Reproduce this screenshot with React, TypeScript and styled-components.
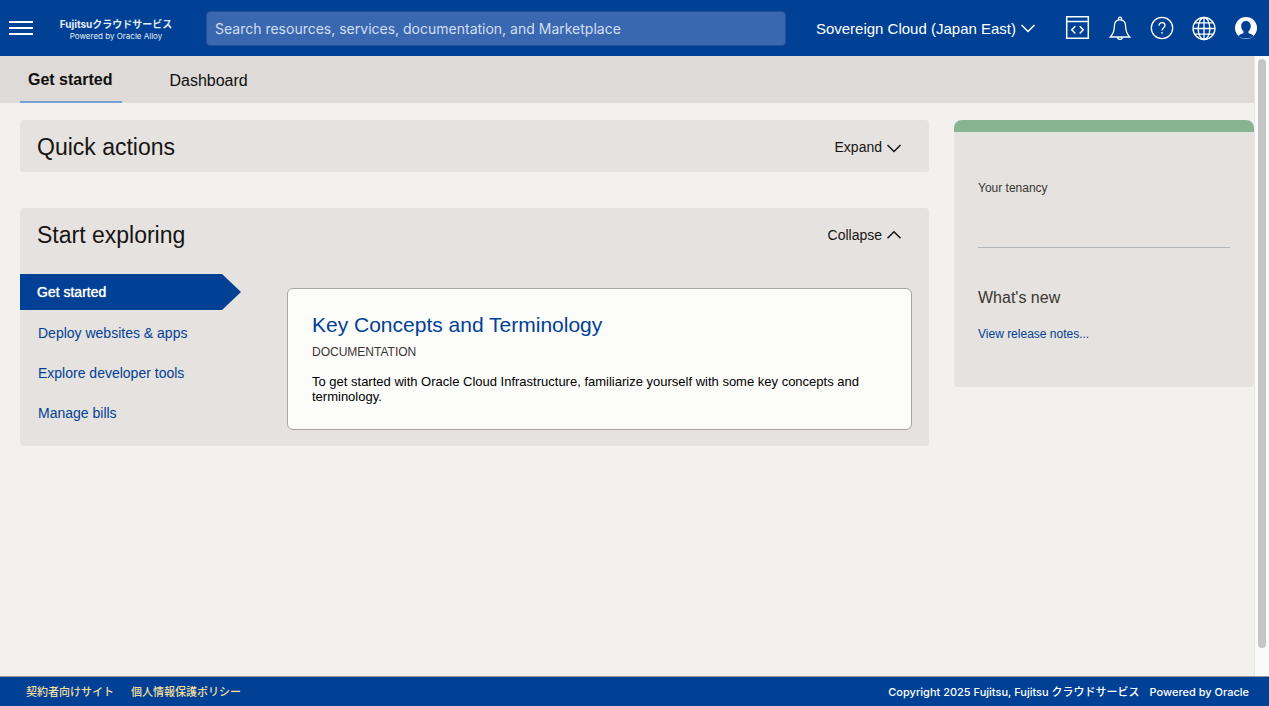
import React from "react";
import styled, { createGlobalStyle } from "styled-components";

const sans = `"Liberation Sans", "Noto Sans CJK JP", sans-serif`;
const brand = `Inter, "Noto Sans CJK JP", sans-serif`;
const navy = "#004195";

const GlobalStyle = createGlobalStyle`
  * { box-sizing: border-box; }
  body { margin: 0; background: #f2f1ed; font-family: ${sans}; color: #161513; }
  h2, h3, p, ul { margin: 0; padding: 0; font-weight: 400; }
  ul { list-style: none; }
  a { text-decoration: none; }
  button { border: 0; background: none; padding: 0; font-family: inherit; color: inherit; cursor: pointer; }
  svg { display: block; }
`;

const Page = styled.div`
  min-height: 100vh;
  display: flex;
  flex-direction: column;
`;

const TopBar = styled.header`
  height: 56px;
  padding: 0 10px 0 8px;
  display: flex;
  align-items: center;
  background: ${navy};
  color: #fff;
`;

const MenuButton = styled.button`
  width: 26px;
  height: 26px;
`;

const Logo = styled.a`
  width: 122px;
  margin: 3px 29px 0 21px;
  display: flex;
  flex-direction: column;
  align-items: center;
  color: #e6ecf5;
  font-family: ${brand};
  white-space: nowrap;
`;

const LogoName = styled.span`
  font-size: 10px;
  line-height: 13px;
  font-weight: 700;
`;

const LogoNote = styled.span`
  font-size: 8px;
  line-height: 10px;
`;

const Search = styled.input`
  flex: 1;
  min-width: 100px;
  height: 35px;
  padding: 1px 8px 0;
  border: 1px solid #1f4f98;
  border-radius: 4px;
  background: #3a68b0;
  color: #fff;
  font-family: ${brand};
  font-size: 14px;
  &::placeholder { color: #d3def0; opacity: 1; }
`;

const RegionButton = styled.button`
  margin: 0 29px 0 30px;
  padding-top: 2px;
  display: flex;
  align-items: flex-start;
  gap: 4px;
  font-size: 15px;
  line-height: 20px;
  white-space: nowrap;
`;

const Tools = styled.div`
  display: flex;
  gap: 16px;
`;

const ToolButton = styled.button`
  width: 26px;
  height: 26px;
`;

const Body = styled.div`
  flex: 1;
  display: flex;
`;

const Content = styled.main`
  flex: 1;
  min-width: 0;
`;

const ScrollRail = styled.div`
  width: 15px;
  padding: 3px 3px 28px;
  display: flex;
  justify-content: center;
  background: #fafafa;
  border-left: 1px solid #e6e6e6;
`;

const ScrollThumb = styled.div`
  width: 8px;
  border-radius: 4px;
  background: #c5c5c5;
`;

const Tabs = styled.nav`
  height: 47px;
  padding-left: 20px;
  display: flex;
  gap: 39px;
  background: #dddad7;
`;

const Tab = styled.a<{ $active?: boolean }>`
  padding: 0 10px 0 8px;
  border-bottom: 2px solid ${(p) => (p.$active ? "#7a9fd3" : "transparent")};
  color: #100f0e;
  font-size: 16px;
  line-height: ${(p) => (p.$active ? 48 : 50)}px;
  font-weight: ${(p) => (p.$active ? 700 : 400)};
`;

const Columns = styled.div`
  padding: 17px 0 20px 20px;
  display: flex;
  align-items: flex-start;
  gap: 25px;
`;

const Sections = styled.div`
  flex: 1;
  min-width: 0;
  display: flex;
  flex-direction: column;
  gap: 36px;
`;

const Panel = styled.section`
  border-radius: 4px;
  background: #e6e2df;
`;

const PanelHeader = styled.div`
  height: 52px;
  padding: 2px 27px 0 17px;
  display: flex;
  align-items: center;
  justify-content: space-between;
`;

const PanelTitle = styled.h2`
  font-size: 23px;
  line-height: 28px;
`;

const ToggleButton = styled.button`
  display: flex;
  align-items: center;
  gap: 4px;
  font-size: 14px;
  line-height: 20px;
`;

const Explore = styled.div`
  padding: 14px 17px 16px 0;
  display: flex;
`;

const TopicList = styled.ul`
  width: 267px;
  display: flex;
  flex-direction: column;
  gap: 4px;
`;

const Topic = styled.li`
  height: 36px;
  padding-left: 18px;
`;

const ActiveTopic = styled.li`
  width: 221px;
  height: 36px;
  padding-left: 17px;
  background: ${navy};
  clip-path: polygon(0 0, 202px 0, 100% 50%, 202px 100%, 0 100%);
`;

const TopicLink = styled.a<{ $active?: boolean }>`
  color: ${(p) => (p.$active ? "#fff" : navy)};
  font-size: 14px;
  line-height: ${(p) => (p.$active ? 36 : 38)}px;
  text-shadow: ${(p) => (p.$active ? "0 0 1px #fff" : "none")};
`;

const DocCard = styled.article`
  flex: 1;
  min-width: 0;
  margin-top: 14px;
  padding: 22px 24px 18px;
  border: 1px solid #a8a6a3;
  border-radius: 6px;
  background: #fcfcfa;
`;

const DocTitle = styled.h3`
  font-size: 21px;
  line-height: 28px;
  a { color: ${navy}; }
`;

const DocKind = styled.p`
  margin: 5px 0 14px;
  color: #3a3632;
  font-size: 12px;
  line-height: 16px;
`;

const DocText = styled.p`
  color: #000;
  font-size: 13px;
  line-height: 15px;
`;

const SidePanel = styled.aside`
  width: 300px;
  padding: 48px 24px 43px;
  border-top: 12px solid #88b494;
  border-radius: 8px 8px 4px 4px;
  background: #e6e2df;
  color: #3a3632;
`;

const Tenancy = styled.p`
  padding-bottom: 51px;
  border-bottom: 1px solid #b2b5b8;
  font-size: 12px;
  line-height: 16px;
`;

const NewsTitle = styled.h3`
  margin: 39px 0 16px;
  font-size: 16px;
  line-height: 22px;
`;

const NewsLink = styled.a`
  display: block;
  color: ${navy};
  font-size: 12px;
  line-height: 19px;
`;

const Footer = styled.footer`
  height: 30px;
  padding: 0 20px 0 26px;
  display: flex;
  align-items: center;
  justify-content: space-between;
  border-top: 1px solid #9b9893;
  background: ${navy};
  color: #fff;
  font-family: ${brand};
  font-size: 11px;
  line-height: 16px;
  font-weight: 500;
`;

const FooterLinks = styled.nav`
  display: flex;
  gap: 17px;
  a { color: #f5dfa0; }
`;

const FooterNote = styled.div`
  display: flex;
  gap: 10px;
`;

function Chevron({ up }: { up?: boolean }) {
  return (
    <svg width="16" height="16" viewBox="0 0 16 16" fill="none" stroke="currentColor" strokeWidth="1.5" aria-hidden="true">
      <path d={up ? "M1.500 11.200 8 4.700l6.500 6.500" : "M1.500 6 8 12.500 14.500 6"} />
    </svg>
  );
}

const iconProps = {
  width: 26,
  height: 26,
  viewBox: "0 0 26 26",
  fill: "none",
  stroke: "#fff",
  strokeWidth: 1.3,
  "aria-hidden": true,
};

function DevToolsIcon() {
  return (
    <svg {...iconProps} strokeWidth={1.5}>
      <path d="M1.700 1.700h21.600v21.600H1.700zM1.700 6.500h21.600" />
      <path d="M10.300 11.200 6.800 14.800l3.500 3.600M14.700 11.200l3.500 3.600-3.500 3.600" />
    </svg>
  );
}

function BellIcon() {
  return (
    <svg {...iconProps}>
      <path d="M13 4.800c-4 0-5.600 2.800-5.600 6.200 0 5.200-1.200 8-4.100 11h19.400c-2.900-3-4.100-5.800-4.100-11 0-3.400-1.600-6.200-5.600-6.200z" />
      <path d="M11.500 5V3.600a1.500 1.500 0 0 1 3 0V5M10.600 22a2.400 2.400 0 0 0 4.800 0" />
    </svg>
  );
}

function HelpIcon() {
  return (
    <svg {...iconProps}>
      <circle cx="13" cy="13" r="10.700" />
      <path d="M10 10.800c0-2 1.300-3.100 3-3.100s3 1 3 2.700c0 2.200-3 2.400-3 5.100" />
      <path d="M13 17v1.700" />
    </svg>
  );
}

function GlobeIcon() {
  return (
    <svg {...iconProps}>
      <circle cx="13" cy="13.500" r="11" />
      <ellipse cx="13" cy="13.500" rx="5.800" ry="11" />
      <path d="M13 2.500v22M2 13.500h22M4 7.800h18M4 19.200h18" />
    </svg>
  );
}

function ProfileIcon() {
  return (
    <svg {...iconProps} stroke="none">
      <circle cx="13" cy="13" r="11" fill="#fff" />
      <path
        fill={navy}
        d="M13 6c-3 0-4.800 2.200-4.800 5.100 0 2.300.8 4.100 2.300 5.200v1.500c0 .9-3.700 1.300-5.100 3.100 2 2 4.600 2.700 7.600 2.700s5.600-.7 7.600-2.700c-1.400-1.800-5.100-2.200-5.100-3.100v-1.500c1.500-1.100 2.300-2.900 2.300-5.200C17.800 8.200 16 6 13 6z"
      />
    </svg>
  );
}

const tools = [
  { label: "Developer tools", Icon: DevToolsIcon },
  { label: "Announcements", Icon: BellIcon },
  { label: "Help", Icon: HelpIcon },
  { label: "Language", Icon: GlobeIcon },
  { label: "Profile", Icon: ProfileIcon },
];

const topics = ["Deploy websites & apps", "Explore developer tools", "Manage bills"];

export default function App() {
  return (
    <Page>
      <GlobalStyle />
      <TopBar>
        <MenuButton aria-label="Menu">
          <svg width="26" height="26" viewBox="0 0 26 26" stroke="#fff" strokeWidth="2" aria-hidden="true">
            <path d="M1 7h24M1 13h24M1 19h24" />
          </svg>
        </MenuButton>
        <Logo href="#">
          <LogoName>Fujitsuクラウドサービス</LogoName>
          <LogoNote>Powered by Oracle Alloy</LogoNote>
        </Logo>
        <Search
          type="search"
          aria-label="Search"
          placeholder="Search resources, services, documentation, and Marketplace"
        />
        <RegionButton>
          Sovereign Cloud (Japan East)
          <Chevron />
        </RegionButton>
        <Tools>
          {tools.map(({ label, Icon }) => (
            <ToolButton key={label} aria-label={label}>
              <Icon />
            </ToolButton>
          ))}
        </Tools>
      </TopBar>

      <Body>
        <Content>
          <Tabs>
            <Tab href="#" $active>Get started</Tab>
            <Tab href="#">Dashboard</Tab>
          </Tabs>
          <Columns>
            <Sections>
              <Panel>
                <PanelHeader>
                  <PanelTitle>Quick actions</PanelTitle>
                  <ToggleButton aria-expanded="false">
                    Expand
                    <Chevron />
                  </ToggleButton>
                </PanelHeader>
              </Panel>
              <Panel>
                <PanelHeader>
                  <PanelTitle>Start exploring</PanelTitle>
                  <ToggleButton aria-expanded="true">
                    Collapse
                    <Chevron up />
                  </ToggleButton>
                </PanelHeader>
                <Explore>
                  <TopicList>
                    <ActiveTopic>
                      <TopicLink href="#" $active>Get started</TopicLink>
                    </ActiveTopic>
                    {topics.map((topic) => (
                      <Topic key={topic}>
                        <TopicLink href="#">{topic}</TopicLink>
                      </Topic>
                    ))}
                  </TopicList>
                  <DocCard>
                    <DocTitle>
                      <a href="#">Key Concepts and Terminology</a>
                    </DocTitle>
                    <DocKind>DOCUMENTATION</DocKind>
                    <DocText>
                      To get started with Oracle Cloud Infrastructure, familiarize yourself with some key concepts and
                      terminology.
                    </DocText>
                  </DocCard>
                </Explore>
              </Panel>
            </Sections>
            <SidePanel>
              <Tenancy>Your tenancy</Tenancy>
              <NewsTitle>What's new</NewsTitle>
              <NewsLink href="#">View release notes...</NewsLink>
            </SidePanel>
          </Columns>
        </Content>
        <ScrollRail aria-hidden="true">
          <ScrollThumb />
        </ScrollRail>
      </Body>

      <Footer>
        <FooterLinks>
          <a href="#">契約者向けサイト</a>
          <a href="#">個人情報保護ポリシー</a>
        </FooterLinks>
        <FooterNote>
          <span>Copyright 2025 Fujitsu, Fujitsu クラウドサービス</span>
          <span>Powered by Oracle</span>
        </FooterNote>
      </Footer>
    </Page>
  );
}
